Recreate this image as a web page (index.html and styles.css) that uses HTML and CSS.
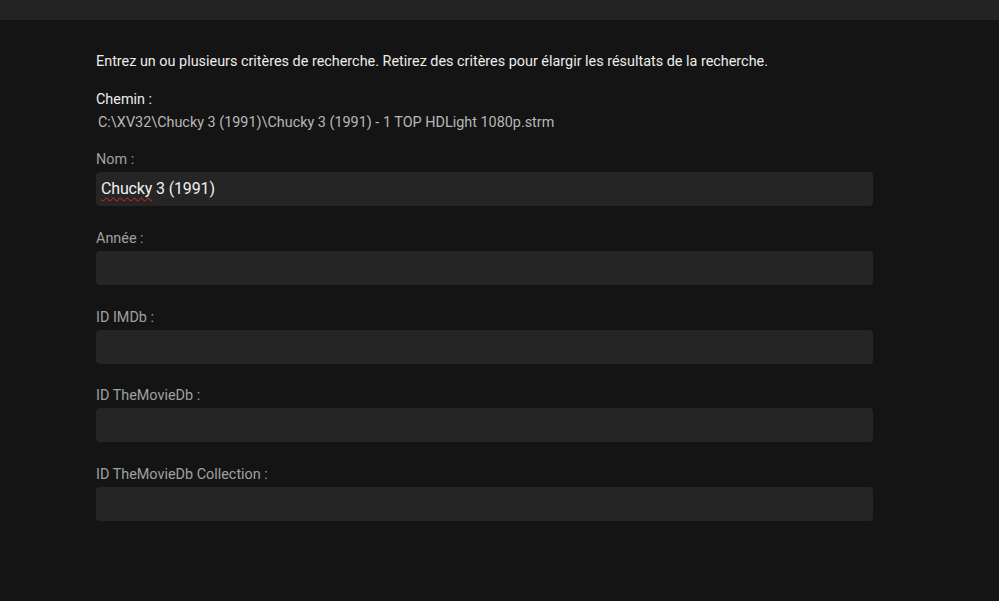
FILE: index.html
```html
<!DOCTYPE html>
<html lang="fr">
<head>
<meta charset="utf-8">
<title>Recherche</title>
<link rel="stylesheet" href="styles.css">
</head>
<body>
<div class="topbar"></div>
<main class="content">
  <p class="intro">Entrez un ou plusieurs critères de recherche. Retirez des critères pour élargir les résultats de la recherche.</p>
  <div class="path-block">
    <div class="path-label">Chemin :</div>
    <div class="path-value">C:\XV32\Chucky 3 (1991)\Chucky 3 (1991) - 1 TOP HDLight 1080p.strm</div>
  </div>
  <div class="field">
    <label class="field-label">Nom :</label>
    <div class="field-input"><span class="misspelled">Chucky</span> 3 (1991)</div>
  </div>
  <div class="field">
    <label class="field-label">Année :</label>
    <div class="field-input"></div>
  </div>
  <div class="field">
    <label class="field-label">ID IMDb :</label>
    <div class="field-input"></div>
  </div>
  <div class="field">
    <label class="field-label">ID TheMovieDb :</label>
    <div class="field-input"></div>
  </div>
  <div class="field">
    <label class="field-label">ID TheMovieDb Collection :</label>
    <div class="field-input"></div>
  </div>
</main>
</body>
</html>
```

FILE: styles.css
```css
html, body {
  margin: 0;
  padding: 0;
  background: #141414;
  font-family: Roboto, "Noto Sans", "Liberation Sans", sans-serif;
  height: 100%;
}
.topbar {
  height: 20px;
  background: #232323;
}
.content {
  padding-left: 96px;
  width: 777px;
  display: flex;
  flex-direction: column;
}
.intro {
  margin: 32px 0 0;
  font-size: 14.4px;
  line-height: 20px;
  color: #ececec;
}
.path-block {
  margin-top: 18px;
  display: flex;
  flex-direction: column;
  gap: 3px;
}
.path-label {
  font-size: 14.4px;
  line-height: 20px;
  color: #ececec;
}
.path-value {
  font-size: 14.4px;
  line-height: 20px;
  color: #b8b8b8;
  padding-left: 2px;
}
.field {
  display: flex;
  flex-direction: column;
  gap: 2px;
  margin-top: 16px;
}
.field + .field {
  margin-top: 21.75px;
}
.field-label {
  font-size: 14.4px;
  line-height: 20px;
  padding-top: 1px;
  color: #a0a0a0;
}
.field-input {
  height: 34px;
  box-sizing: border-box;
  background: #252525;
  border-radius: 4px;
  padding: 0 5px;
  font-size: 16px;
  line-height: 34px;
  color: #f0f0f0;
  letter-spacing: -0.15px;
}
.misspelled {
  text-decoration: underline wavy #e02020;
  text-decoration-thickness: 1px;
  text-underline-offset: 3px;
}
```
